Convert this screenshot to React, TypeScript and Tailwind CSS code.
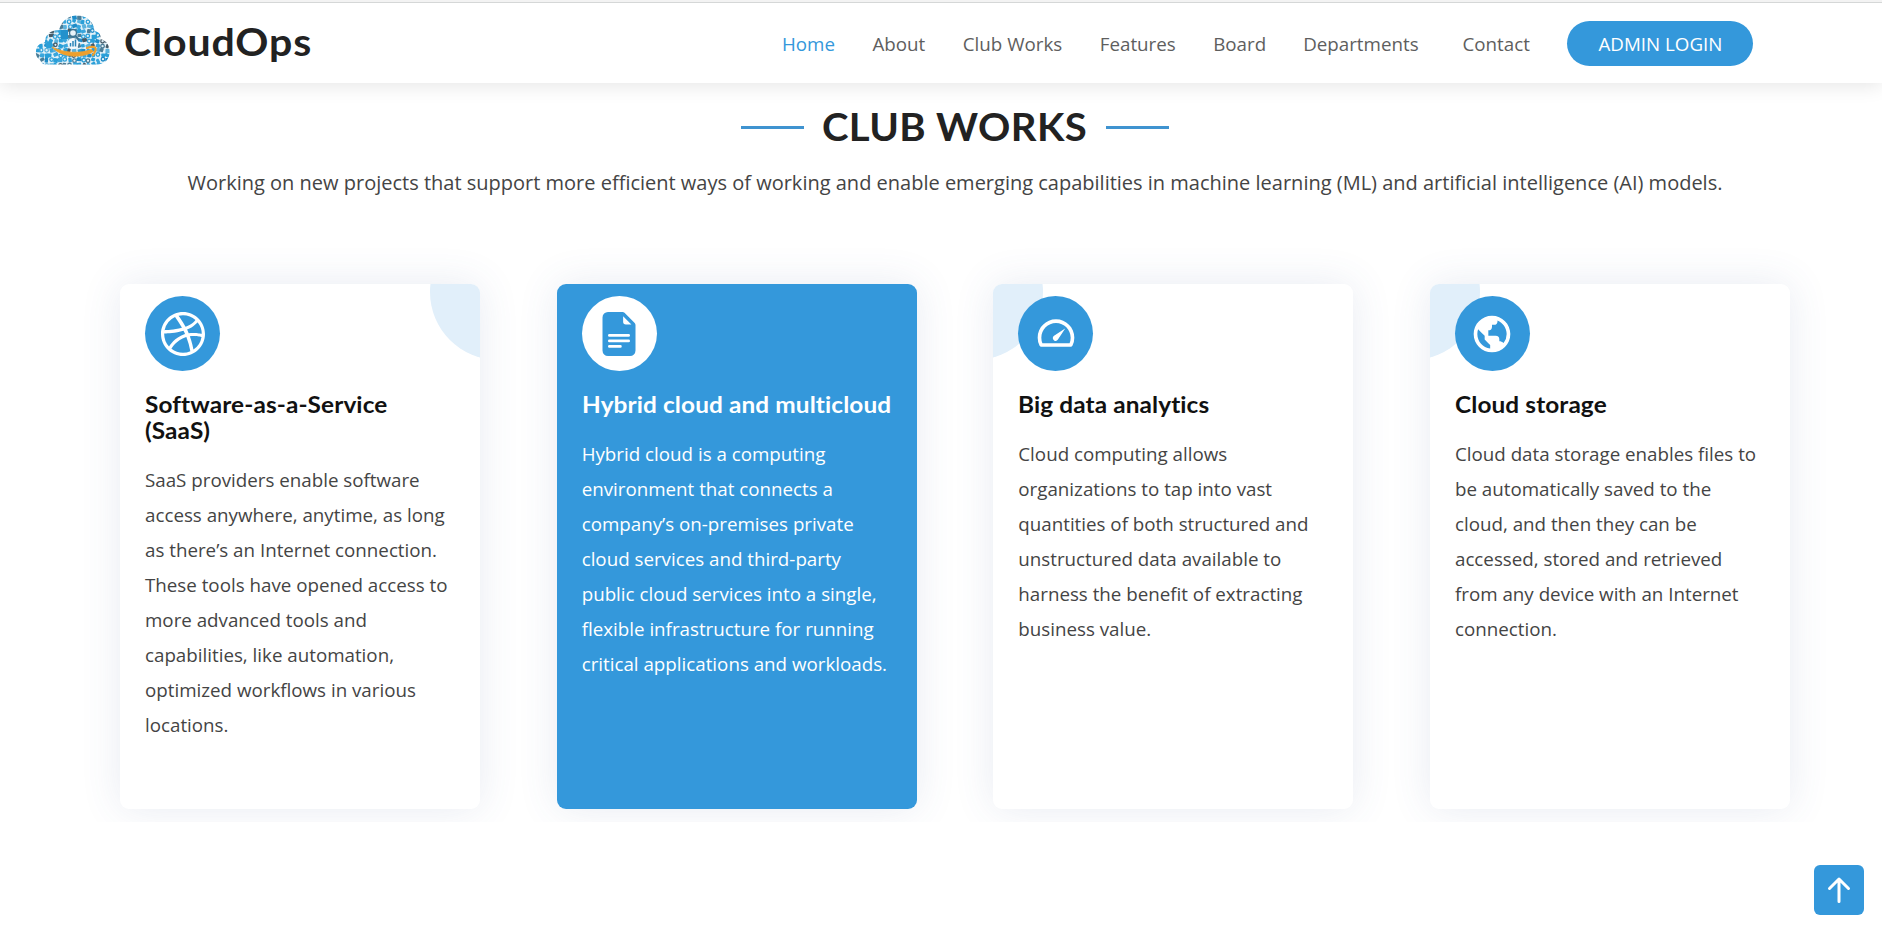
import React from 'react';
import { BsDribbble, BsFileEarmarkTextFill } from 'react-icons/bs';
import { BiTachometer, BiWorld } from 'react-icons/bi';

const nav = [
  { label: 'Home', cls: 'text-[#3498db] w-[52px] mr-[38.5px]' },
  { label: 'About', cls: 'w-[52px] mr-[38.3px]' },
  { label: 'Club Works', cls: 'w-[99px] mr-[38px]' },
  { label: 'Features', cls: 'w-[75px] mr-[38.4px]' },
  { label: 'Board', cls: 'w-[52px] mr-[38px]' },
  { label: 'Departments', cls: 'w-[116px] mr-[43.3px]' },
  { label: 'Contact', cls: 'w-[67px] mr-[38px]' },
];

const cards = [
  {
    title: ['Software-as-a-Service', '(SaaS)'],
    Icon: BsDribbble,
    lines: ['SaaS providers enable software', 'access anywhere, anytime, as long', 'as there’s an Internet connection.', 'These tools have opened access to', 'more advanced tools and', 'capabilities, like automation,', 'optimized workflows in various', 'locations.'],
    corner: '-right-[86px]',
    active: false,
  },
  {
    title: ['Hybrid cloud and multicloud'],
    Icon: BsFileEarmarkTextFill,
    lines: ['Hybrid cloud is a computing', 'environment that connects a', 'company’s on-premises private', 'cloud services and third-party', 'public cloud services into a single,', 'flexible infrastructure for running', 'critical applications and workloads.'],
    corner: '',
    active: true,
  },
  {
    title: ['Big data analytics'],
    Icon: BiTachometer,
    lines: ['Cloud computing allows', 'organizations to tap into vast', 'quantities of both structured and', 'unstructured data available to', 'harness the benefit of extracting', 'business value.'],
    corner: '-left-[86px]',
    active: false,
  },
  {
    title: ['Cloud storage'],
    Icon: BiWorld,
    lines: ['Cloud data storage enables files to', 'be automatically saved to the', 'cloud, and then they can be', 'accessed, stored and retrieved', 'from any device with an Internet', 'connection.'],
    corner: '-left-[86px]',
    active: false,
  },
];

const rand = (n: number) => {
  const v = Math.sin(n * 12.9898) * 43758.5453;
  return v - Math.floor(v);
};

const tints = ['#2a9fd8', '#3aa6dc', '#1f8cc8', '#5bb2dc', '#4b7d97', '#2a9fd8', '#465b68'];

const cells = Array.from({ length: 17 * 11 }, (_, i) => ({
  x: (i % 17) * 4.7 - 1 + rand(i) * 1.6,
  y: Math.floor(i / 17) * 4.8 - 1 + rand(i + 300) * 1.6,
  w: 3 + rand(i + 600) * 2.4,
  h: 3 + rand(i + 900) * 1.8,
  tilt: rand(i + 1200) * 60 - 30,
  fill: tints[Math.floor(rand(i + 1500) * tints.length)],
  ring: rand(i + 1800) > 0.75,
}));

function CloudLogo() {
  return (
    <svg width="76" height="51" viewBox="0 0 76 51" className="mb-[6px] shrink-0">
      <defs>
        <clipPath id="cloud">
          <path d="M11 49.500C7 49.500 5.500 46 5 44.500C1.500 43 0.500 39 1 36C1.500 31 5 28 10 27C10 20 15 15 24 15C27 5 34 0.500 42 0.500C52 0.500 59 7 59.500 16C64 17 66 19 65.500 24C71 25.500 74.500 30 74.500 36C75 44 70 49.500 61 49.500Z" />
        </clipPath>
      </defs>
      <g clipPath="url(#cloud)">
        <rect width="76" height="51" fill="#e3f1f8" />
        {cells.map((c, i) =>
          c.ring ? (
            <circle key={i} cx={c.x + 2} cy={c.y + 2} r="1.8" fill="none" stroke={c.fill} strokeWidth="1.3" />
          ) : (
            <rect key={i} x={c.x} y={c.y} width={c.w} height={c.h} rx="0.8" fill={c.fill} transform={`rotate(${c.tilt} ${c.x + 2} ${c.y + 2})`} />
          ),
        )}
        <rect x="26" y="15" width="7" height="9" fill="#2391cc" />
        <circle cx="14" cy="30" r="3.600" fill="#2a9fd8" />
        <circle cx="38" cy="18" r="3.500" fill="#e8f3f9" stroke="#3c7493" strokeWidth="1.400" />
        <path d="M40.500 21L44 25" stroke="#3c7493" strokeWidth="2" />
        <circle cx="38" cy="28.500" r="5.500" fill="#f4f9fc" />
        <path d="M35.500 31.500V28M38 31.500V26M40.500 31.500V24.500" stroke="#2b84b8" strokeWidth="1.500" />
      </g>
      <path d="M17 32C28 38 46 39 56 34.500L58.500 36.500C47 43.500 27 43 17 32Z" fill="#ee9f2d" stroke="#ee9f2d" strokeWidth="0.800" strokeLinejoin="round" />
      <path d="M52 33C56 31.500 60 31.500 60.500 33C61 35 59.500 38 58 40" fill="none" stroke="#ee9f2d" strokeWidth="2.200" strokeLinecap="round" />
    </svg>
  );
}

export default function App() {
  return (
    <div className="relative flex h-[937px] w-full flex-col overflow-hidden bg-white font-['Open_Sans',sans-serif] text-[#444444]">
      <div className="z-20 h-[3px] shrink-0 border-b border-[#d5d7d7] bg-[#f3f3f3]" />
      <header className="z-10 flex h-[80px] shrink-0 items-center bg-white pl-[35px] shadow-[0_2px_19px_rgba(0,0,0,0.11)]">
        <CloudLogo />
        <div className="ml-[13px] w-[640px] shrink-0">
          <span className="inline-block origin-left -translate-y-[2px] scale-x-[1.08] whitespace-nowrap font-['Lato',sans-serif] text-[38px] font-bold tracking-[0.8px] text-[#222222]">CloudOps</span>
        </div>
        <nav className="ml-[18px] flex shrink-0 items-center whitespace-nowrap text-[18.75px] text-[#5e5e5e]">
          {nav.map((n) => (
            <a key={n.label} className={`block pt-[2px] ${n.cls}`}>{n.label}</a>
          ))}
          <a className="flex h-[45px] w-[186px] items-center justify-center rounded-[23px] bg-[#3498db] pt-[2px] text-white">ADMIN LOGIN</a>
        </nav>
      </header>
      <section className="flex h-[739px] shrink-0 flex-col overflow-hidden pl-[120px]">
        <div className="flex w-[1670px] flex-col items-center pt-[21px]">
          <div className="flex h-[46px] items-center">
            <span className="h-[3px] w-[63px] bg-[#3f93d0]" />
            <h2 className="mx-[19px] w-[264px] whitespace-nowrap text-center font-['Lato',sans-serif] text-[38.5px] font-bold text-[#222222]">
              <span className="-mx-[10px] inline-block scale-x-[1.04] tracking-[0.4px]">CLUB WORKS</span>
            </h2>
            <span className="h-[3px] w-[63px] bg-[#3f93d0]" />
          </div>
          <p className="mt-[18px] h-[30px] whitespace-nowrap text-[20px] leading-[30px]">
            Working on new projects that support more efficient ways of working and enable emerging capabilities in machine learning (ML) and artificial intelligence (AI) models.
          </p>
        </div>
        <div className="mt-[86px] flex w-[1670px] shrink-0 justify-between">
          {cards.map(({ title, Icon, lines, corner, active }) => (
            <article key={title[0]} className={`relative h-[525px] w-[360px] rounded-[9px] shadow-[0_0_40px_rgba(68,88,144,0.12)] ${active ? 'bg-[#3498db] text-white' : 'bg-white'}`}>
              {!active && (
                <div className="pointer-events-none absolute inset-0 overflow-hidden rounded-[9px]">
                  <div className={`absolute -top-[60px] size-[136px] rounded-full bg-[#e1effa] ${corner}`} />
                </div>
              )}
              <div className="relative px-[25px] pt-[12px]">
                <div className={`flex size-[75px] items-center justify-center rounded-full ${active ? 'bg-white text-[#3498db]' : 'bg-[#3498db] text-white'}`}>
                  <Icon size={44} />
                </div>
                <h4 className={`mt-[20px] origin-left scale-x-[1.06] whitespace-nowrap font-['Lato',sans-serif] text-[23px] leading-[26px] font-bold tracking-[0.1px] ${active ? 'text-white' : 'text-[#111111]'}`}>
                  {title.map((t) => <span key={t} className="block">{t}</span>)}
                </h4>
                <p className="mt-[19px] whitespace-nowrap text-[18.75px] leading-[35px]">
                  {lines.map((l) => <span key={l} className="block">{l}</span>)}
                </p>
              </div>
            </article>
          ))}
        </div>
      </section>
      <a className="absolute top-[865px] left-[1814px] flex size-[50px] items-center justify-center rounded-[6px] bg-[#3498db]">
        <svg width="24" height="28" viewBox="0 0 24 28" fill="none" stroke="white" strokeWidth="3" strokeLinecap="round" strokeLinejoin="round">
          <path d="M12 25.500V3M2.500 12.500L12 3L21.500 12.500" />
        </svg>
      </a>
    </div>
  );
}
